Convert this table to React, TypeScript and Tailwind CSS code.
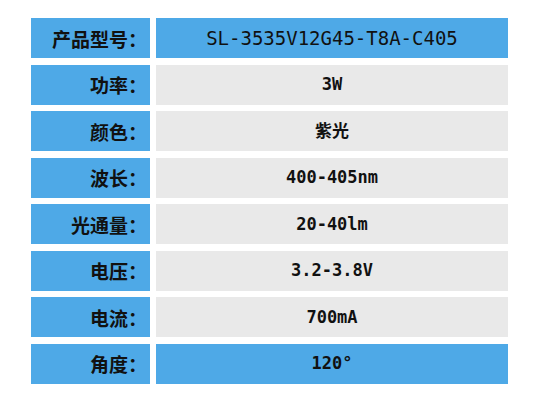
import React from "react";

const rows: { label: string; value: string; blue?: boolean }[] = [
  { label: "产品型号：", value: "SL-3535V12G45-T8A-C405", blue: true },
  { label: "功率：", value: "3W" },
  { label: "颜色：", value: "紫光" },
  { label: "波长：", value: "400-405nm" },
  { label: "光通量：", value: "20-40lm" },
  { label: "电压：", value: "3.2-3.8V" },
  { label: "电流：", value: "700mA" },
  { label: "角度：", value: "120°", blue: true },
];

export default function App() {
  return (
    <div className="w-[544px] h-[400px] bg-white pt-[18px] pl-[31px]">
      <div className="flex flex-col gap-[6.57px]">
        {rows.map((r, i) => (
          <div key={i} className="flex gap-[6px] h-[40px]">
            <div
              className="w-[119px] bg-[#4ea9e7] flex items-center justify-end pr-[3px] text-[19px] font-bold text-[#111] leading-none"
              style={{ fontFamily: '"Noto Sans CJK SC", sans-serif' }}
            >
              {r.label}
            </div>
            <div
              className={`w-[352px] flex items-center justify-center leading-none text-[#111] ${
                r.blue ? "bg-[#4ea9e7]" : "bg-[#e9e9e9]"
              } ${i === 0 ? "text-[19px] font-normal" : "text-[17px] font-bold"}`}
              style={{ fontFamily: '"DejaVu Sans Mono", "Noto Sans CJK SC", monospace' }}
            >
              {r.value}
            </div>
          </div>
        ))}
      </div>
    </div>
  );
}
